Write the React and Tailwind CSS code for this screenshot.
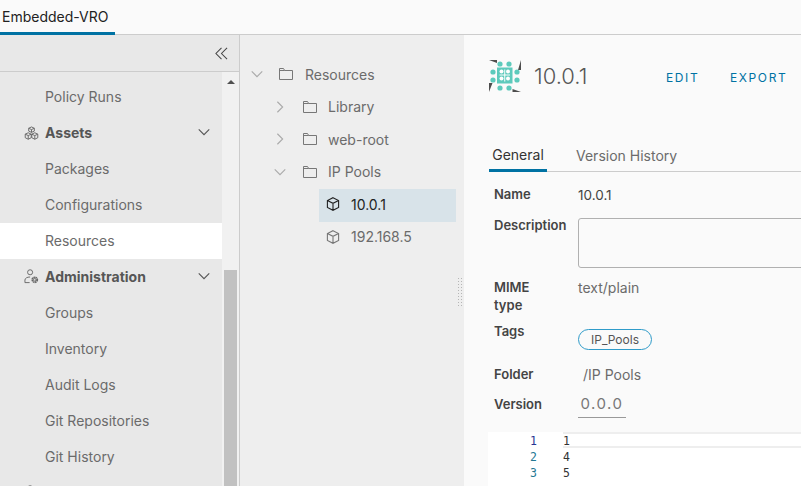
import React from 'react';

const navItems = [
  { label: 'Policy Runs' },
  { label: 'Assets', group: 'assets' },
  { label: 'Packages' },
  { label: 'Configurations' },
  { label: 'Resources', active: true },
  { label: 'Administration', group: 'admin' },
  { label: 'Groups' },
  { label: 'Inventory' },
  { label: 'Audit Logs' },
  { label: 'Git Repositories' },
  { label: 'Git History' },
  { label: '', group: 'more' },
];

function Chevron({ dir = 'down', className = '' }) {
  const d = dir === 'down' ? 'M2 5l6 6 6-6' : 'M5 2l6 6-6 6';
  return (
    <svg viewBox="0 0 16 16" className={className} fill="none" stroke="currentColor" strokeWidth="1.3">
      <path d={d} />
    </svg>
  );
}

function FolderIcon() {
  return (
    <svg viewBox="0 0 14 12" className="w-[14px] h-[12px] text-[#777]" fill="none" stroke="currentColor" strokeWidth="1">
      <path d="M.5 11.5V.5h4l1.2 2h7.8v9z M.5 2.5h5.2" />
    </svg>
  );
}

function CubeIcon({ className = '' }) {
  return (
    <svg viewBox="0 0 14 14" className={`w-[14px] h-[14px] ${className}`} fill="none" stroke="currentColor" strokeWidth="1.1">
      <path d="M7 .7l5.6 2.8v7L7 13.3l-5.6-2.8v-7zM1.4 3.5L7 6.3l5.6-2.8M7 6.3v7" />
    </svg>
  );
}

function AssetsIcon() {
  return (
    <svg viewBox="0 0 16 16" className="w-[15px] h-[15px] text-[#666]" fill="none" stroke="currentColor" strokeWidth="1">
      <path d="M8 1l3 1.4v3L8 6.8 5 5.4v-3zM5 2.4l3 1.4 3-1.4M8 3.8v3" />
      <path d="M4.5 7.2l3.2 1.5v3.8l-3.2 1.6-3.2-1.6V8.7zM1.3 8.7l3.2 1.5 3.2-1.5M4.5 10.2v3.9" />
      <path d="M11.5 7.2l3.2 1.5v3.8l-3.2 1.6-3.2-1.6V8.7zM8.3 8.7l3.2 1.5 3.2-1.5M11.5 10.2v3.9" />
    </svg>
  );
}

function AdminIcon() {
  return (
    <svg viewBox="0 0 16 16" className="w-[15px] h-[15px] text-[#666]" fill="none">
      <circle cx="6.5" cy="3.5" r="2.7" stroke="currentColor" />
      <path d="M1 14.5v-2.7c0-2 2.4-3.3 5.5-3.3M1 14.5h5" stroke="currentColor" />
      <circle cx="11.5" cy="11.5" r="2.6" stroke="currentColor" strokeWidth="2" strokeDasharray="1.6 0.5" />
      <circle cx="11.5" cy="11.5" r="1.6" fill="currentColor" />
      <circle cx="11.5" cy="11.5" r="0.9" fill="#e8e8e8" />
    </svg>
  );
}

function Logo() {
  const outer = [
    [11, 4], [20, 4], [4, 12], [4, 20], [28, 12], [28, 20], [11, 28], [20, 28],
  ];
  const inner = [
    [12.5, 11.5], [19, 11.5], [12.5, 18.5], [19, 18.5],
  ];
  return (
    <svg viewBox="0 0 32 32" className="w-8 h-8 shrink-0">
      <path d="M0 0h8v3zM32 0v10h-3zM0 32v-9h3.5zM32 32h-8.5v-3z" fill="#4d4d4d" />
      <rect x="8" y="7.5" width="15.5" height="16" fill="#5dcabc" />
      {outer.map(([x, y], i) => (
        <circle key={i} cx={x} cy={y} r="2.6" fill="#5dcabc" />
      ))}
      {inner.map(([x, y], i) => (
        <circle key={i} cx={x} cy={y} r="2" fill="#fff" />
      ))}
      <path d="M15.75 9.5v12M10.5 15h10.5" stroke="#fff" strokeWidth="1" />
    </svg>
  );
}

function TreeRow({ label, children, selected }) {
  return (
    <div className={`h-[32.5px] pb-[2px] flex items-center ${selected ? 'bg-[#d8e3e9]' : ''}`}>
      {children}
      <span className={`text-[14px] ${selected ? 'text-[#222]' : 'text-[#6b6b6b]'}`}>{label}</span>
    </div>
  );
}

function Row({ label, className = '', children }) {
  return (
    <div className={`flex ${className}`}>
      <div className="w-[84px] shrink-0 text-[13px] font-semibold text-[#444] leading-[18px] pr-6">{label}</div>
      <div className="flex-1 min-w-0 leading-[18px]">{children}</div>
    </div>
  );
}

export default function App() {
  return (
    <div className="w-[801px] h-[486px] overflow-hidden flex flex-col bg-[#fafafa] font-['Inter','Liberation_Sans',sans-serif]">
      <div className="h-[35px] shrink-0 border-b border-[#ccc]">
        <div className="w-[115px] h-[35px] border-b-[3px] border-[#0072a3] pl-[2px] text-[14px] leading-[34px] text-[#222]">Embedded-VRO</div>
      </div>

      <div className="flex-1 flex min-h-0">
        <aside className="w-[240px] shrink-0 flex flex-col bg-[#e8e8e8] border-r border-[#ccc] overflow-hidden">
          <div className="h-[37px] shrink-0 border-b border-[#ccc] flex items-center justify-end pr-[11px] text-[#444]">
            <svg viewBox="0 0 14 14" className="w-[13px] h-[13px]" fill="none" stroke="currentColor" strokeWidth="1.1">
              <path d="M7 1L1 7l6 6M13 1L7 7l6 6" />
            </svg>
          </div>
          <div className="flex-1 flex min-h-0">
            <nav className="w-[222px] shrink-0 pt-[7px]">
              {navItems.map((item, i) => (
                <div key={i} className={`h-9 pb-[2px] flex items-center pl-[45px] pr-[11px] relative text-[14px] ${item.active ? 'bg-white' : ''} ${item.group ? 'font-bold text-[#565656]' : 'text-[#6b6b6b]'}`}>
                  {item.group === 'assets' && <span className="absolute left-[24px] top-[11px]"><AssetsIcon /></span>}
                  {item.group === 'admin' && <span className="absolute left-[24px] top-[10px]"><AdminIcon /></span>}
                  {item.group === 'more' && <span className="absolute left-[24px] top-[10px]"><AdminIcon /></span>}
                  <span className="flex-1">{item.label}</span>
                  {(item.group === 'assets' || item.group === 'admin') && <Chevron className="w-[14px] h-[14px] text-[#555]" />}
                </div>
              ))}
            </nav>
            <div className="flex-1 bg-[#f1f1f1] relative">
              <div className="absolute left-[5px] top-[8px] w-0 h-0 border-l-[4px] border-r-[4px] border-b-[4px] border-l-transparent border-r-transparent border-b-[#505050]" />
              <div className="absolute left-[2px] right-[2px] top-[198px] bottom-0 bg-[#c1c1c1]" />
            </div>
          </div>
        </aside>

        <section className="w-[224px] shrink-0 bg-[#eeeeee] relative pt-[24px] pl-[10px] pr-[8px]">
          <TreeRow label="Resources">
            <Chevron className="w-[14px] h-[14px] text-[#aaa] mr-[15px]" />
            <span className="mr-[12px]"><FolderIcon /></span>
          </TreeRow>
          <TreeRow label="Library">
            <Chevron dir="right" className="w-[14px] h-[14px] text-[#aaa] ml-[23px] mr-[16px]" />
            <span className="mr-[11px]"><FolderIcon /></span>
          </TreeRow>
          <TreeRow label="web-root">
            <Chevron dir="right" className="w-[14px] h-[14px] text-[#aaa] ml-[23px] mr-[16px]" />
            <span className="mr-[11px]"><FolderIcon /></span>
          </TreeRow>
          <TreeRow label="IP Pools">
            <Chevron className="w-[14px] h-[14px] text-[#aaa] ml-[23px] mr-[16px]" />
            <span className="mr-[11px]"><FolderIcon /></span>
          </TreeRow>
          <div className="pl-[69px]">
            <TreeRow label="10.0.1" selected>
              <CubeIcon className="ml-[7px] mr-[11px] text-[#222]" />
            </TreeRow>
            <TreeRow label="192.168.5">
              <CubeIcon className="ml-[7px] mr-[11px] text-[#777]" />
            </TreeRow>
          </div>
          <div className="absolute right-[1px] top-[242px] w-[6px] h-[29px] bg-[radial-gradient(#b5b5b5_1px,transparent_1px)] bg-[length:3px_3px]" />
        </section>

        <main className="flex-1 min-w-0 pt-[25px] pl-[25px] overflow-hidden flex flex-col">
          <div className="flex items-center h-8">
            <Logo />
            <span className="ml-[13px] text-[22px] font-light text-[#565656] w-[132px]">10.0.1</span>
            <span className="pt-[3px] text-[12px] tracking-[1.6px] text-[#0072a3] w-[64px]">EDIT</span>
            <span className="pt-[3px] text-[12px] tracking-[1.6px] text-[#0072a3]">EXPORT</span>
          </div>
          <div className="mt-[43px] h-[37px] flex items-end border-b border-[#ccc]">
            <div className="h-[37px] w-[58px] -mb-px border-b-[3px] border-[#0072a3] text-[14px] text-[#333] flex items-center justify-center pt-[5px] mr-[29px]">General</div>
            <div className="h-[37px] text-[14px] text-[#6b6b6b] flex items-center pt-[5px]">Version History</div>
          </div>

          <div className="pl-[5px] mt-[13px] flex flex-col">
            <Row label="Name">
              <span className="text-[13.5px] text-[#444]">10.0.1</span>
            </Row>
            <Row label="Description" className="mt-[12px]">
              <div className="h-[50px] mt-[2px] -mr-4 border border-[#b0b0b0] rounded-[3px] bg-[#fafafa]" />
            </Row>
            <Row label="MIME type" className="mt-[10px]">
              <span className="text-[14px] text-[#6b6b6b]">text/plain</span>
            </Row>
            <Row label="Tags" className="mt-[8px]">
              <div className="flex items-center justify-center w-[74px] h-[21px] mt-[7px] rounded-full border border-[#2f9bc9] text-[12px] text-[#555]">IP_Pools</div>
            </Row>
            <Row label="Folder" className="mt-[15px]">
              <span className="pl-[5px] text-[14px] text-[#6b6b6b]">/IP Pools</span>
            </Row>
            <Row label="Version" className="mt-[11px]">
              <div className="w-[48px] h-[23px] border-b border-[#999] text-center text-[15px] tracking-[1.5px] text-[#777]">0.0.0</div>
            </Row>
          </div>

          <div className="mt-[14px] -ml-px flex-1 bg-white font-['DejaVu_Sans_Mono',monospace] text-[11.5px] leading-[16px] flex">
            <div className="w-[61px] shrink-0 pt-px pr-[12px] text-right">
              <div className="text-[#283593]">1</div>
              <div className="text-[#237893]">2</div>
              <div className="text-[#237893]">3</div>
            </div>
            <div className="flex-1 pt-px pl-[14px] text-[#333] relative">
              <div className="absolute left-[14px] right-0 top-0 h-[16px] border-y-2 border-[#eee]" />
              <div className="relative">1</div>
              <div>4</div>
              <div>5</div>
            </div>
          </div>
        </main>
      </div>
    </div>
  );
}
